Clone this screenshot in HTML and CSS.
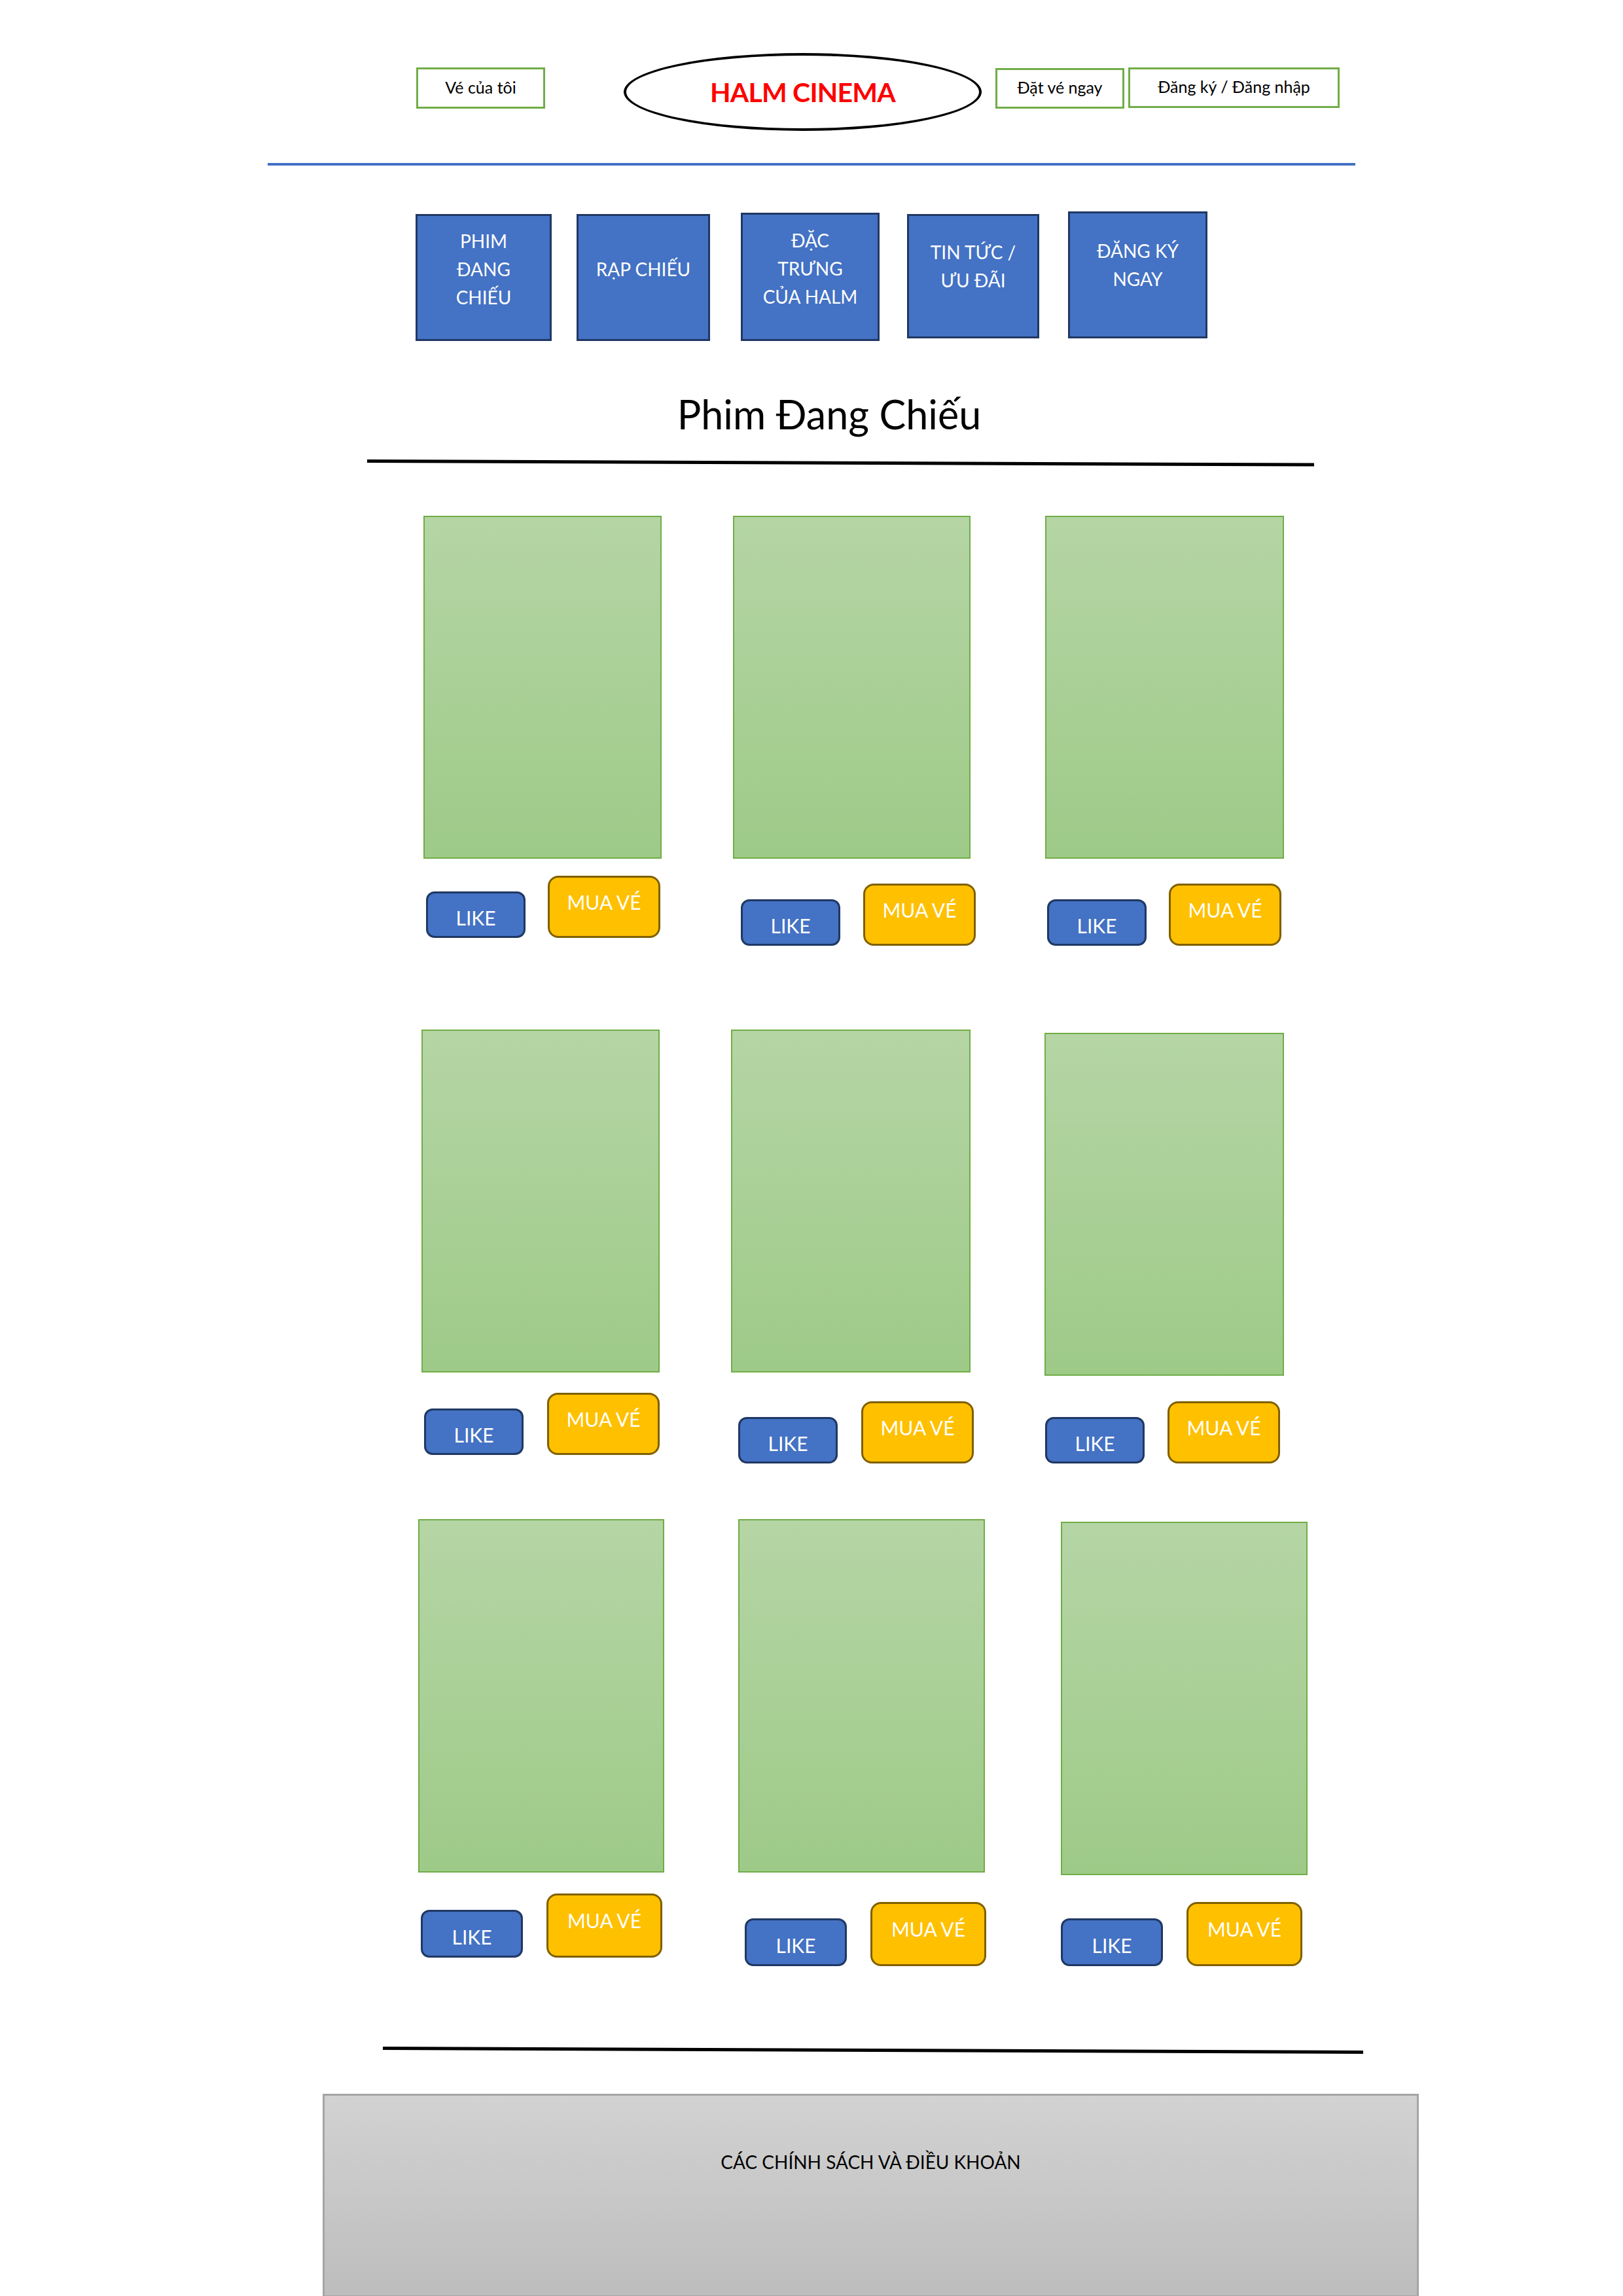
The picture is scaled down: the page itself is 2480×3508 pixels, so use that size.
FILE: index.html
```html
<!DOCTYPE html>
<html lang="vi">
<head>
<meta charset="utf-8">
<title>HALM CINEMA</title>
<link rel="stylesheet" href="styles.css">
</head>
<body>
<header class="topbar">
  <a class="tab tab--mine">Vé của tôi</a>
  <div class="logo"><span class="logo-text">HALM CINEMA</span></div>
  <a class="tab tab--book">Đặt vé ngay</a>
  <a class="tab tab--auth">Đăng ký / Đăng nhập</a>
</header>
<div class="rule-blue"></div>

<nav class="menu">
  <a class="menu-item menu-item--1">PHIM<br>ĐANG<br>CHIẾU</a>
  <a class="menu-item menu-item--2">RẠP CHIẾU</a>
  <a class="menu-item menu-item--3">ĐẶC<br>TRƯNG<br>CỦA HALM</a>
  <a class="menu-item menu-item--4">TIN TỨC /<br>ƯU ĐÃI</a>
  <a class="menu-item menu-item--5">ĐĂNG KÝ<br>NGAY</a>
</nav>

<h1 class="title">Phim Đang Chiếu</h1>
<svg class="slant slant--top" width="1447" height="17" viewBox="0 0 1447 17">
  <line x1="0" y1="6.5" x2="1447" y2="12" stroke="#000" stroke-width="5"/>
</svg>

<main class="movies">
  <div class="row row--1">
    <div class="card card--1">
      <div class="poster"></div>
      <div class="actions"><a class="btn btn--like">LIKE</a><a class="btn btn--buy">MUA VÉ</a></div>
    </div>
    <div class="card card--2">
      <div class="poster"></div>
      <div class="actions"><a class="btn btn--like">LIKE</a><a class="btn btn--buy">MUA VÉ</a></div>
    </div>
    <div class="card card--3">
      <div class="poster"></div>
      <div class="actions"><a class="btn btn--like">LIKE</a><a class="btn btn--buy">MUA VÉ</a></div>
    </div>
  </div>
  <div class="row row--2">
    <div class="card card--4">
      <div class="poster"></div>
      <div class="actions"><a class="btn btn--like">LIKE</a><a class="btn btn--buy">MUA VÉ</a></div>
    </div>
    <div class="card card--5">
      <div class="poster"></div>
      <div class="actions"><a class="btn btn--like">LIKE</a><a class="btn btn--buy">MUA VÉ</a></div>
    </div>
    <div class="card card--6">
      <div class="poster"></div>
      <div class="actions"><a class="btn btn--like">LIKE</a><a class="btn btn--buy">MUA VÉ</a></div>
    </div>
  </div>
  <div class="row row--3">
    <div class="card card--7">
      <div class="poster"></div>
      <div class="actions"><a class="btn btn--like">LIKE</a><a class="btn btn--buy">MUA VÉ</a></div>
    </div>
    <div class="card card--8">
      <div class="poster"></div>
      <div class="actions"><a class="btn btn--like">LIKE</a><a class="btn btn--buy">MUA VÉ</a></div>
    </div>
    <div class="card card--9">
      <div class="poster"></div>
      <div class="actions"><a class="btn btn--like">LIKE</a><a class="btn btn--buy">MUA VÉ</a></div>
    </div>
  </div>
</main>

<svg class="slant slant--bottom" width="1498" height="17" viewBox="0 0 1498 17">
  <line x1="0" y1="6.5" x2="1498" y2="12.5" stroke="#000" stroke-width="5"/>
</svg>

<footer class="footer">
  <p class="footer-text">CÁC CHÍNH SÁCH VÀ ĐIỀU KHOẢN</p>
</footer>
</body>
</html>
```

FILE: styles.css
```css
html, body {
  margin: 0;
  padding: 0;
}
body {
  width: 2480px;
  height: 3508px;
  overflow: hidden;
  background: #ffffff;
  font-family: Lato, "Open Sans", "Noto Sans", sans-serif;
  color: #000000;
}

/* ---------- top bar ---------- */
.topbar {
  display: flex;
  align-items: flex-start;
  padding: 81px 0 0 636px;
  height: 119px;
}
.tab {
  box-sizing: border-box;
  display: flex;
  align-items: center;
  justify-content: center;
  border: 3px solid #70AD47;
  height: 63px;
  margin-top: 22px;
  font-size: 25px;
  color: #000;
  padding-bottom: 4px;
}
.tab--mine { width: 197px; }
.tab--book { width: 197px; margin-left: 21px; margin-top: 23px; height: 62px; }
.tab--auth { width: 323px; margin-left: 6px; height: 62px; }

.logo {
  box-sizing: border-box;
  width: 547px;
  height: 119px;
  margin-left: 120px;
  border: 4px solid #000;
  border-radius: 50%;
  display: flex;
  align-items: center;
  justify-content: center;
}
.logo-text {
  color: #FF0000;
  font-weight: 700;
  font-size: 41px;
  letter-spacing: -0.8px;
}

.rule-blue {
  margin: 49px 0 0 409px;
  width: 1662px;
  height: 4px;
  background: #4472C4;
}

/* ---------- menu ---------- */
.menu {
  display: flex;
  align-items: flex-start;
  margin-top: 70px;
  padding-left: 635px;
  height: 198px;
}
.menu-item {
  box-sizing: border-box;
  display: flex;
  align-items: center;
  justify-content: center;
  text-align: center;
  background: #4472C4;
  border: 3px solid #203864;
  color: #ffffff;
  font-size: 28px;
  line-height: 43px;
  padding-bottom: 26px;
  height: 194px;
}
.menu-item--1 { width: 208px; margin-top: 4px; }
.menu-item--2 { width: 204px; margin-left: 38px; margin-top: 4px; }
.menu-item--3 { width: 212px; margin-left: 47px; margin-top: 2px; height: 196px; }
.menu-item--4 { width: 202px; margin-left: 42px; margin-top: 4px; height: 190px; padding-bottom: 30px; }
.menu-item--5 { width: 213px; margin-left: 44px; padding-bottom: 30px; }

/* ---------- title ---------- */
.title {
  margin: 76px 0 0 0;
  padding-left: 54px;
  text-align: center;
  font-size: 61px;
  line-height: 72px;
  font-weight: 400;
}
.slant {
  display: block;
}
.slant--top {
  margin: 29px 0 0 561px;
}

/* ---------- movies ---------- */
.movies {
  margin-top: 73px;
}
.row {
  display: flex;
  align-items: flex-start;
}
.row--2 { margin-top: 128px; }
.row--3 { margin-top: 85px; }

.card {
  display: flex;
  flex-direction: column;
  flex-shrink: 0;
}
.poster {
  box-sizing: border-box;
  height: 524px;
  border: 2px solid #70AD47;
  background: linear-gradient(#B5D5A5, #9ECA88);
}
.row--3 .poster { height: 540px; }

.actions {
  display: flex;
  align-items: flex-end;
}
.btn {
  box-sizing: border-box;
  flex-shrink: 0;
  display: flex;
  align-items: center;
  justify-content: center;
  color: #ffffff;
  font-size: 30px;
}
.btn--like {
  width: 152px;
  height: 71px;
  background: #4472C4;
  border: 3px solid #1F3864;
  border-radius: 13px;
  padding-top: 8px;
}
.btn--buy {
  width: 172px;
  height: 95px;
  background: #FFC000;
  border: 3px solid #7F6000;
  border-radius: 16px;
  padding-bottom: 16px;
}
.row--3 .btn--like { width: 156px; height: 73px; }
.row--3 .btn--buy { width: 177px; height: 98px; }

/* per-card placement (hand-drawn layout) */
.card--1 { width: 364px; margin-left: 647px; }
.card--1 .actions { margin-top: 26px; padding-left: 4px; gap: 34px; }
.card--2 { width: 363px; margin-left: 109px; }
.card--2 .actions { margin-top: 38px; padding-left: 12px; gap: 35px; }
.card--3 { width: 365px; margin-left: 114px; }
.card--3 .actions { margin-top: 38px; padding-left: 3px; gap: 34px; }

.card--4 { width: 364px; margin-left: 644px; }
.card--4 .actions { margin-top: 31px; padding-left: 4px; gap: 36px; }
.card--5 { width: 366px; margin-left: 109px; }
.card--5 .actions { margin-top: 44px; padding-left: 11px; gap: 36px; }
.card--6 { width: 366px; margin-left: 113px; margin-top: 5px; }
.card--6 .actions { margin-top: 39px; padding-left: 1px; gap: 35px; }

.card--7 { width: 376px; margin-left: 639px; }
.card--7 .actions { margin-top: 32px; padding-left: 4px; gap: 36px; }
.card--8 { width: 377px; margin-left: 113px; }
.card--8 .actions { margin-top: 45px; padding-left: 10px; gap: 36px; }
.card--9 { width: 377px; margin-left: 116px; margin-top: 4px; }
.card--9 .actions { margin-top: 41px; padding-left: 0; gap: 36px; }

/* ---------- bottom ---------- */
.slant--bottom {
  margin: 119px 0 0 585px;
}
.footer {
  box-sizing: border-box;
  margin: 59px 0 0 493px;
  width: 1675px;
  height: 311px;
  border: 3px solid #A5A5A5;
  background: linear-gradient(#D2D2D2, #BDBDBD);
  padding-top: 84px;
}
.footer-text {
  margin: 0;
  text-align: center;
  font-size: 28px;
  line-height: 34px;
  color: #000;
}
```
